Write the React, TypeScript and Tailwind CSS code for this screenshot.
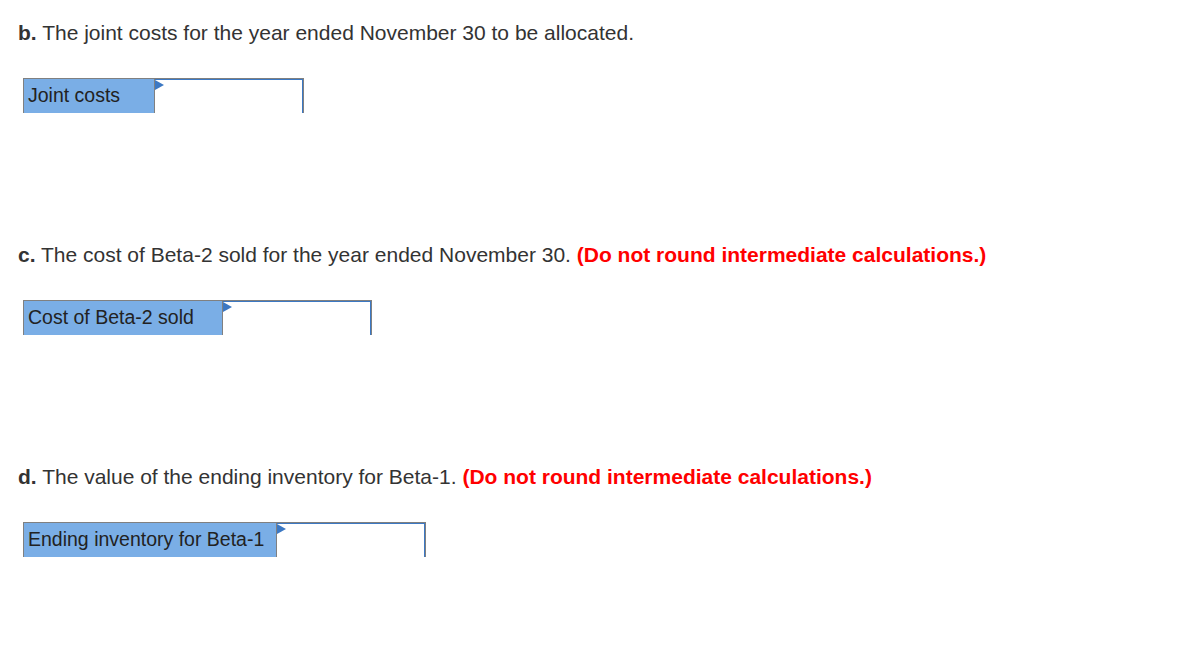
import React from "react";

function Field({ label, labelWidth, inputWidth }: { label: string; labelWidth: number; inputWidth: number }) {
  return (
    <div className="flex h-[35px] mt-[30px] ml-[5px]">
      <div
        className="h-full bg-[#7aaee6] border-t border-l border-[#808080] pl-[4px] text-[19.5px] leading-[33px] text-[#222]"
        style={{ width: labelWidth }}
      >
        {label}
      </div>
      <div className="relative h-full border-t border-l border-r border-[#808080]" style={{ width: inputWidth }}>
        <div className="h-full border-t border-r border-[#3c78c3]"></div>
        <svg className="absolute left-0 top-[1px]" width="9" height="11" viewBox="0 0 9 11">
          <polygon points="0,0 9,5 0,10" fill="#3c78c3" />
        </svg>
      </div>
    </div>
  );
}

export default function App() {
  return (
    <div className="bg-white w-[1177px] h-[654px] pl-[18px] pt-[18px] text-[#333]" style={{ fontFamily: '"Liberation Sans", Arial, sans-serif' }}>
      <div className="h-[222px]">
        <p className="text-[21px] leading-[30px]">
          <b>b.</b> The joint costs for the year ended November 30 to be allocated.
        </p>
        <Field label="Joint costs" labelWidth={131} inputWidth={150} />
      </div>
      <div className="h-[222px]">
        <p className="text-[21px] leading-[30px]">
          <b>c.</b> The cost of Beta-2 sold for the year ended November 30.{" "}
          <b className="text-[#ff0000]">(Do not round intermediate calculations.)</b>
        </p>
        <Field label="Cost of Beta-2 sold" labelWidth={199} inputWidth={150} />
      </div>
      <div>
        <p className="text-[21px] leading-[30px]">
          <b>d.</b> The value of the ending inventory for Beta-1.{" "}
          <b className="text-[#ff0000]">(Do not round intermediate calculations.)</b>
        </p>
        <Field label="Ending inventory for Beta-1" labelWidth={253} inputWidth={150} />
      </div>
    </div>
  );
}
